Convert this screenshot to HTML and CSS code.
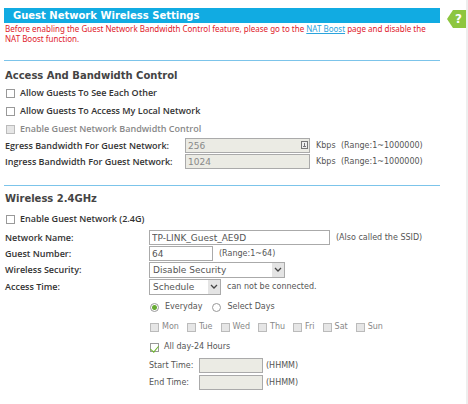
FILE: index.html
```
<!DOCTYPE html>
<html lang="en">
<head>
    <meta charset="UTF-8">
    <meta name="viewport" content="width=device-width, initial-scale=1.0">
    <title>Guest Network Wireless Settings</title>
    <link rel="stylesheet" href="styles.css">
</head>
<body>

    <main>
        <h1>Guest Network Wireless Settings</h1>
        <p class="notice">Before enabling the Guest Network Bandwidth Control feature, please go to the <a href="#">NAT Boost</a> page and disable the NAT Boost function.</p>

        <!-- Access and bandwidth -->
        <section class="access">
            <h2>Access And Bandwidth Control</h2>
            <label class="option"><input type="checkbox"> Allow Guests To See Each Other</label>
            <label class="option"><input type="checkbox"> Allow Guests To Access My Local Network</label>
            <label class="option disabled"><input type="checkbox" disabled> Enable Guest Network Bandwidth Control</label>
            <div class="row wide">
                <label for="egress">Egress Bandwidth For Guest Network:</label>
                <div class="field">
                    <div class="with-icon">
                        <input type="text" id="egress" value="256" disabled>
                        <svg class="fill-icon" viewBox="0 0 7 8" aria-hidden="true">
                            <rect x="0.5" y="0.5" width="6" height="7" fill="#eee" stroke="#777"/>
                            <path d="M3.5 2v3M2 5.5h3" stroke="#777" fill="none"/>
                        </svg>
                    </div>
                    <span class="unit">Kbps</span>
                    <span class="hint">(Range:1~1000000)</span>
                </div>
            </div>
            <div class="row wide">
                <label for="ingress">Ingress Bandwidth For Guest Network:</label>
                <div class="field">
                    <input type="text" id="ingress" value="1024" disabled>
                    <span class="unit">Kbps</span>
                    <span class="hint">(Range:1~1000000)</span>
                </div>
            </div>
        </section>

        <!-- Wireless 2.4GHz -->
        <section class="wireless">
            <h2>Wireless 2.4GHz</h2>
            <label class="option"><input type="checkbox"> Enable Guest Network (2.4G)</label>
            <div class="row">
                <label for="ssid">Network Name:</label>
                <div class="field">
                    <input type="text" id="ssid" class="long" value="TP-LINK_Guest_AE9D">
                    <span class="hint">(Also called the SSID)</span>
                </div>
            </div>
            <div class="row">
                <label for="guests">Guest Number:</label>
                <div class="field">
                    <input type="text" id="guests" class="short" value="64">
                    <span class="hint">(Range:1~64)</span>
                </div>
            </div>
            <div class="row">
                <label for="security">Wireless Security:</label>
                <div class="field">
                    <div class="select security">
                        <select id="security"><option>Disable Security</option></select>
                        <svg viewBox="0 0 8 6" aria-hidden="true"><path d="M1 1l3 3l3-3"/></svg>
                    </div>
                </div>
            </div>
            <div class="row">
                <label for="access-time">Access Time:</label>
                <div class="field">
                    <div class="select schedule">
                        <select id="access-time"><option>Schedule</option></select>
                        <svg viewBox="0 0 8 6" aria-hidden="true"><path d="M1 1l3 3l3-3"/></svg>
                    </div>
                    <span class="hint">can not be connected.</span>
                </div>
            </div>

            <div class="schedule-options">
                <div class="radios">
                    <label><input type="radio" name="days" checked> Everyday</label>
                    <label><input type="radio" name="days"> Select Days</label>
                </div>
                <div class="days">
                    <label><input type="checkbox" disabled> Mon</label>
                    <label><input type="checkbox" disabled> Tue</label>
                    <label><input type="checkbox" disabled> Wed</label>
                    <label><input type="checkbox" disabled> Thu</label>
                    <label><input type="checkbox" disabled> Fri</label>
                    <label><input type="checkbox" disabled> Sat</label>
                    <label><input type="checkbox" disabled> Sun</label>
                </div>
                <label class="all-day"><input type="checkbox" checked> All day-24 Hours</label>
                <div class="time">
                    <label for="start">Start Time:</label>
                    <input type="text" id="start" class="short" disabled>
                    <span>(HHMM)</span>
                </div>
                <div class="time">
                    <label for="end">End Time:</label>
                    <input type="text" id="end" class="short" disabled>
                    <span>(HHMM)</span>
                </div>
            </div>
        </section>
    </main>

    <aside>
        <a href="#" class="help" aria-label="Help">?</a>
    </aside>

</body>
</html>
```
FILE: styles.css
```
* {
    box-sizing: border-box;
}

body {
    margin: 0;
    min-height: 100vh;
    display: flex;
    background-color: #fff;
    color: #555;
    font-family: "DejaVu Sans", sans-serif;
    font-size: 8px;
    line-height: 10px;
    border-right: 2px solid #eee;
}

main {
    flex: 1;
    padding: 8px 7px 12px 4px;
}

h1 {
    margin: 0;
    padding-left: 9px;
    background-color: #11abe2;
    color: #fff;
    font-size: 10px;
    line-height: 15px;
}

.notice {
    margin: 1px 0 16px;
    padding: 0 1px;
    color: #e0202a;
    font-family: "Noto Sans", sans-serif;
}

.notice a {
    color: #2ba3dc;
}

section {
    border-top: 1px solid #7cc4ea;
    padding: 8px 0 0 1px;
}

.access {
    padding-bottom: 15px;
}

.wireless {
    padding-top: 6px;
}

h2 {
    margin: 0 0 2px;
    color: #444;
    font-size: 10px;
    line-height: 13px;
}

.wireless h2 {
    margin-bottom: 5px;
}

input[type="checkbox"],
input[type="radio"] {
    appearance: none;
    flex: none;
    width: 9px;
    height: 9px;
    margin: 0;
    border: 1px solid #999;
    background-color: #fff;
}

input[type="checkbox"]:disabled {
    border-color: #bbb;
    background-color: #e6e6e6;
}

input[type="checkbox"]:checked {
    display: flex;
    align-items: flex-start;
    justify-content: center;
}

input[type="checkbox"]:checked::after {
    content: "";
    width: 4px;
    height: 7px;
    border: solid #6db52c;
    border-width: 0 1px 1px 0;
    transform: rotate(40deg);
}

input[type="radio"] {
    border-radius: 50%;
}

input[type="radio"]:checked {
    background: radial-gradient(circle, #6a3 2px, #fff 3px);
}

.option {
    display: flex;
    align-items: center;
    gap: 5px;
    height: 18px;
    padding-left: 1px;
}

.option,
.row > label {
    color: #333;
    font-family: "Open Sans", sans-serif;
    font-size: 9px;
    font-weight: 600;
}

.option.disabled {
    color: #888;
}

.wireless .option {
    margin-bottom: 2px;
}

.row {
    display: grid;
    grid-template-columns: 144px 1fr;
    align-items: center;
    margin-bottom: 1px;
}

.row.wide {
    grid-template-columns: 180px 1fr;
}

.field {
    display: flex;
    align-items: center;
}

input[type="text"] {
    width: 125px;
    height: 15px;
    padding: 0 2px;
    border: 1px solid #aaa;
    background-color: #fff;
    color: #555;
    font: inherit;
    font-size: 9px;
}

input[type="text"]:disabled {
    background-color: #ebebe4;
    color: #888;
}

input[type="text"].long {
    width: 181px;
}

input[type="text"].short {
    width: 64px;
}

.with-icon {
    position: relative;
    display: flex;
}

.fill-icon {
    position: absolute;
    top: 3px;
    right: 2px;
    width: 7px;
    height: 8px;
}

.unit {
    width: 19px;
    margin-left: 6px;
}

.hint {
    margin-left: 6px;
}

.select {
    position: relative;
    display: flex;
}

.select select {
    appearance: none;
    width: 100%;
    height: 16px;
    padding: 0 3px;
    border: 1px solid #aaa;
    border-radius: 0;
    background: linear-gradient(#e4e4e4, #e4e4e4) right / 12px no-repeat #fff;
    color: #555;
    font: inherit;
    font-size: 9px;
}

.select svg {
    position: absolute;
    top: 5px;
    right: 3px;
    width: 8px;
    height: 6px;
    fill: none;
    stroke: #444;
    stroke-width: 1.3;
    pointer-events: none;
}

.security {
    width: 136px;
}

.schedule {
    width: 72px;
}

.schedule-options {
    margin-left: 144px;
    padding-top: 1px;
}

.schedule-options label {
    display: flex;
    align-items: center;
}

.radios,
.days,
.all-day {
    display: flex;
    height: 20px;
    padding-left: 1px;
}

.radios {
    gap: 10px;
}

.radios label {
    gap: 6px;
}

.all-day {
    gap: 5px;
}

.days {
    gap: 8px;
    color: #888;
}

.days label {
    gap: 3px;
}

.time {
    display: flex;
    align-items: center;
    height: 17px;
}

.time label {
    width: 50px;
}

.time span {
    margin-left: 3px;
}

aside {
    width: 19px;
    padding-top: 10px;
}

.help {
    display: block;
    padding-left: 8px;
    background-color: #8dc63f;
    clip-path: polygon(0 50%, 6px 0, 100% 0, 100% 100%, 6px 100%);
    color: #fff;
    font-size: 12px;
    font-weight: bold;
    line-height: 18px;
    text-decoration: none;
}
```
